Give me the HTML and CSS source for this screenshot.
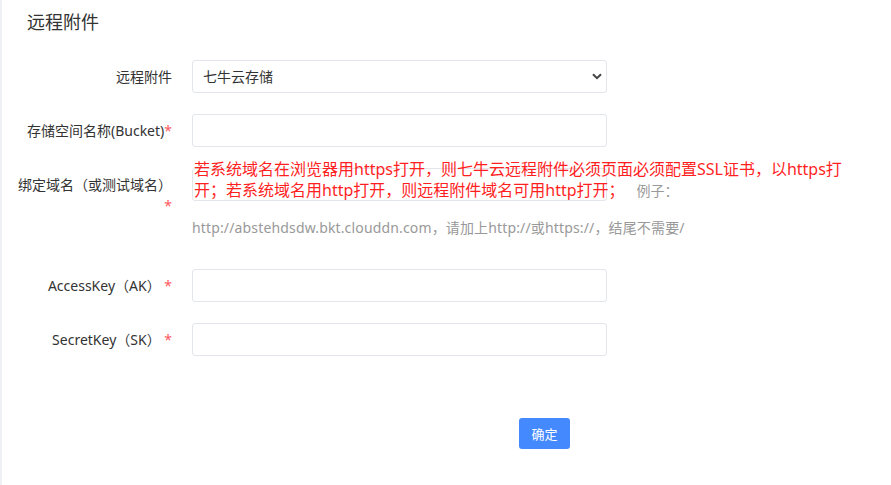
FILE: index.html
```html
<!DOCTYPE html>
<html lang="zh-CN">
<head>
    <meta charset="UTF-8">
    <meta name="viewport" content="width=device-width, initial-scale=1.0">
    <title>远程附件</title>
    <link rel="stylesheet" href="styles.css">
</head>
<body>
    <div class="page">
        <!-- 页面标题 -->
        <h1 class="page-title">远程附件</h1>

        <form class="setting-form" onsubmit="return false">
            <!-- 远程附件类型 -->
            <div class="form-row">
                <label class="form-label" for="remoteType">远程附件</label>
                <div class="form-field">
                    <select id="remoteType" class="form-select">
                        <option>七牛云存储</option>
                        <option>阿里云OSS</option>
                        <option>腾讯云COS</option>
                    </select>
                </div>
            </div>

            <div class="form-row">
                <label class="form-label" for="bucket">存储空间名称(Bucket)<span class="required">*</span></label>
                <div class="form-field">
                    <input type="text" id="bucket" class="form-input">
                </div>
            </div>

            <!-- 绑定域名，带提示说明 -->
            <div class="form-row has-help">
                <label class="form-label" for="domain">绑定域名（或测试域名） <span class="required">*</span></label>
                <div class="form-field">
                    <div class="input-wrap">
                        <input type="text" id="domain" class="form-input">
                        <div class="warn-note">若系统域名在浏览器用https打开，则七牛云远程附件必须页面必须配置SSL证书，以https打<br>开；若系统域名用http打开，则远程附件域名可用http打开；<span class="example">例子：</span></div>
                    </div>
                    <div class="help-text">http://abstehdsdw.bkt.clouddn.com，请加上http://或https://，结尾不需要/</div>
                </div>
            </div>

            <div class="form-row">
                <label class="form-label" for="accessKey">AccessKey（AK） <span class="required">*</span></label>
                <div class="form-field">
                    <input type="text" id="accessKey" class="form-input">
                </div>
            </div>

            <div class="form-row">
                <label class="form-label" for="secretKey">SecretKey（SK） <span class="required">*</span></label>
                <div class="form-field">
                    <input type="text" id="secretKey" class="form-input">
                </div>
            </div>

            <div class="form-actions">
                <button type="button" class="btn-primary">确定</button>
            </div>
        </form>
    </div>
</body>
</html>
```

FILE: styles.css
```css
/* 页面整体 */
body {
    margin: 0;
    padding: 0;
    min-height: 485px;
    box-sizing: border-box;
    border-left: 2px solid #eef0f3;
    background-color: #fff;
    font-family: "Noto Sans", "Noto Sans CJK SC", sans-serif;
    font-size: 14px;
    color: #333;
}

.page {
    padding-top: 10px;
}

.page-title {
    margin: 0;
    padding-left: 25px;
    font-size: 18px;
    font-weight: normal;
    line-height: 24px;
    color: #333;
}

/* 表单 */
.setting-form {
    margin-top: 26px;
}

.form-row {
    display: flex;
    align-items: flex-start;
    margin-bottom: 21px;
}

.form-row.has-help {
    margin-bottom: 32px;
}

.form-label {
    flex-shrink: 0;
    width: 160px;
    margin-left: 10px;
    padding: 6px 0;
    line-height: 21px;
    text-align: right;
    color: #333;
}

.required {
    color: #ff5a5f;
}

.form-field {
    width: 415px;
    margin-left: 20px;
}

.form-input,
.form-select {
    display: block;
    width: 100%;
    height: 33px;
    box-sizing: border-box;
    border: 1px solid #e2e5ea;
    border-radius: 3px;
    background-color: #fff;
    font-family: inherit;
    font-size: 14px;
    color: #333;
    outline: none;
}

.form-input {
    padding: 0 10px;
}

.form-select {
    padding: 0 30px 0 10px;
    appearance: none;
    -webkit-appearance: none;
    background-image: url("data:image/svg+xml,%3Csvg xmlns='http://www.w3.org/2000/svg' width='10' height='7' viewBox='0 0 10 7'%3E%3Cpath d='M1 1.2l4 4 4-4' fill='none' stroke='%23444' stroke-width='2'/%3E%3C/svg%3E");
    background-repeat: no-repeat;
    background-position: right 4px center;
}

/* 绑定域名提示 */
.input-wrap {
    position: relative;
}

.warn-note {
    position: absolute;
    top: -9px;
    left: 2px;
    white-space: nowrap;
    font-size: 16px;
    line-height: 21px;
    color: #ff1f1f;
}

.warn-note .example {
    margin-left: 12px;
    font-size: 14px;
    color: #999;
}

.help-text {
    margin-top: 18px;
    line-height: 18px;
    font-size: 14px;
    color: #999;
    letter-spacing: 0.15px;
    white-space: nowrap;
}

/* 按钮 */
.form-actions {
    margin-top: 62px;
    padding-left: 517px;
}

.btn-primary {
    width: 51px;
    height: 31px;
    padding: 0;
    border: none;
    border-radius: 3px;
    background-color: #4589ff;
    color: #fff;
    font-family: inherit;
    font-size: 13px;
    cursor: pointer;
}
```
